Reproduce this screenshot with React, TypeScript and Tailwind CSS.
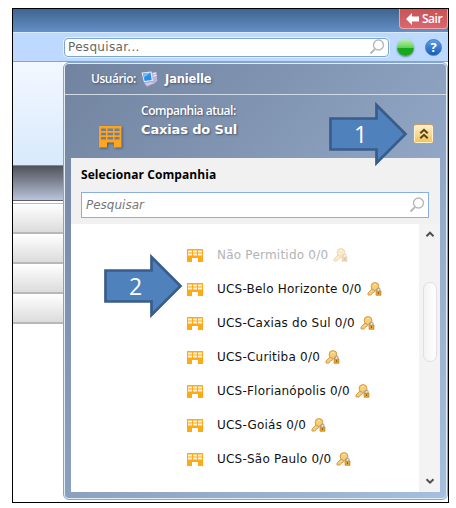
import React from 'react';

type Company = { name: string; disabled?: boolean };

const companies: Company[] = [
  { name: 'Não Permitido 0/0', disabled: true },
  { name: 'UCS-Belo Horizonte 0/0' },
  { name: 'UCS-Caxias do Sul 0/0' },
  { name: 'UCS-Curitiba 0/0' },
  { name: 'UCS-Florianópolis 0/0' },
  { name: 'UCS-Goiás 0/0' },
  { name: 'UCS-São Paulo 0/0' },
];

function SearchIcon() {
  return (
    <svg width="16" height="16" viewBox="0 0 16 16" fill="none" stroke="#b9b9b9" strokeWidth="1.4">
      <circle cx="9.5" cy="6" r="5" />
      <path d="M6 10 1.5 14.5" strokeWidth="2" />
    </svg>
  );
}

function CompanyIcon() {
  return (
    <svg width="16" height="13" viewBox="0 0 16 13" className="shrink-0">
      <path d="M0 0h16v13h-5V9H5v4H0z" fill="#ffa917" />
      <path d="M1 1.500h4v2H1zM6 1.500h4v2H6zM11 1.500h4v2h-4zM1 4.500h4v2H1zM6 4.500h4v2H6zM11 4.500h4v2h-4z" fill="#fff3dc" />
    </svg>
  );
}

function BuildingIcon() {
  return (
    <svg width="23" height="22" viewBox="0 0 23 22" className="drop-shadow-[1px_1px_1px_#4b5a74]">
      <path d="M0 0h22.500v21.500H15v-5H8v5H0z" fill="#fda51c" />
      <path d="M2 2.500h5v2.500H2zM8.500 2.500h5.500v2.500H8.500zM15.500 2.500h5v2.500h-5zM2 6.800h5v2.500H2zM8.500 6.800h5.500v2.500H8.500zM15.500 6.800h5v2.500h-5zM2 11h5v2.500H2zM8.500 11h5.500v2.500H8.500zM15.500 11h5v2.500h-5z" fill="#71809a" />
    </svg>
  );
}

function KeyIcon() {
  return (
    <svg width="15" height="14" viewBox="0 0 15 14" className="shrink-0">
      <path d="M5.500 6.500 1 11v2h3l1-1.500L8.500 9" fill="#f4cf83" stroke="#d39b49" />
      <circle cx="8" cy="4.500" r="3.900" fill="#f7cd75" stroke="#d79a3e" />
      <path d="M6.500 3.200q1-1.200 2.500-.8" fill="none" stroke="#fff1bd" />
      <path d="M9.800 9V7.600a1.600 1.600 0 0 1 3.200 0V9" fill="none" stroke="#a7a6a0" strokeWidth="1.200" />
      <path d="M9 9h5v4.300H9z" fill="#e4a130" stroke="#c78729" strokeWidth=".7" />
      <path d="M11.500 10.200v1.800" stroke="#8a5a16" />
    </svg>
  );
}

function ComputerIcon() {
  return (
    <svg width="17" height="16" viewBox="0 0 17 16">
      <path d="m10 2 5.500-1 .8 9-4.300 3.500z" fill="#b9b8da" />
      <path d="m12 2.500 3-.5M12.500 5l3-.7" stroke="#f1f0ff" />
      <path d="m.5 1.500 10-1 1.500 9.500-9 1.500z" fill="#e9e9f8" />
      <path d="m1.800 2.600 7.700-.8 1.200 7.200-7 1.100z" fill="#2b8fe9" />
      <path d="m1.800 2.600 7.700-.8-6.700 5z" fill="#70c0fb" />
      <path d="m3 12 8-1.500 3 1.500-8 3.500z" fill="#cfcce8" stroke="#9c98c4" strokeWidth=".6" />
    </svg>
  );
}

function ScrollArrow({ down }: { down?: boolean }) {
  return (
    <svg width="10" height="7" viewBox="0 0 10 7" fill="none" stroke="#505050" strokeWidth="2">
      <path d={down ? 'm1.500 1.200 3.500 3.500 3.500-3.500' : 'm1.500 5.200 3.500-3.500 3.500 3.500'} />
    </svg>
  );
}

function StepArrow({ step, className }: { step: number; className: string }) {
  return (
    <div className={`absolute h-[66px] w-[79px] ${className}`}>
      <svg width="79" height="66" viewBox="0 0 79 66">
        <path d="M1.500 17.500H47.500V4L76.500 33 47.500 62V48.500H1.500z" fill="#4f81bd" stroke="#385d8a" strokeWidth="2.700" />
      </svg>
      <span className="absolute left-[25px] top-[19px] font-['Open_Sans',sans-serif] text-[23px] leading-[28px] text-white">{step}</span>
    </div>
  );
}

export default function App() {
  return (
    <div className="relative h-[508px] w-[456px] overflow-hidden bg-white pl-3 pt-2 font-['DejaVu_Sans',sans-serif]">
      <div className="flex h-[495px] w-[437px] flex-col border border-black bg-white">
        {/* Title bar */}
        <div className="flex h-6 shrink-0 justify-end border-b border-[#d9ecff] bg-linear-to-b from-[#3f658f] to-[#6590c7]">
          <div className="flex h-5 w-[49px] items-center gap-[3px] rounded-b-sm border border-t-0 border-[#f4a3a4] bg-linear-to-b from-[#c95357] to-[#d9676b] pl-[6px]">
            <svg width="13" height="12" viewBox="0 0 13 12">
              <path d="M0 6 6 0v3.500h7v5H6V12z" fill="white" />
            </svg>
            <span className="font-['Open_Sans',sans-serif] text-[12px] font-semibold leading-4 tracking-[-0.5px] text-white">Sair</span>
          </div>
        </div>

        {/* Global search */}
        <div className="flex h-[29px] shrink-0 items-center border-b border-[#7fa5d2] bg-[#bdd9ff] pl-[51px]">
          <div className="flex h-[19px] w-[325px] items-center justify-between rounded-sm border border-[#7da6d3] bg-white pl-[3px] pr-[3px] ring-1 ring-[#e2f0ff]">
            <span className="text-[12px] leading-4 tracking-[0.32px] text-[#666]">Pesquisar...</span>
            <SearchIcon />
          </div>
          <div className="ml-2 h-[17px] w-[17px] rounded-full bg-linear-to-b from-[#b5efaa] from-5% via-[#5fd457] via-50% to-[#17a91c] to-55% shadow-[0_1px_2px_#5f8191]" />
          <div className="ml-[11px] flex h-[17px] w-[17px] items-center justify-center rounded-full border border-[#477fc0] bg-linear-to-b from-[#5c9ee5] to-[#175bb8] font-['Open_Sans',sans-serif] text-[13px] font-bold leading-none text-white">?</div>
        </div>

        <div className="flex min-h-0 flex-1">
          {/* Page behind the panel */}
          <div className="w-[50px] shrink-0">
            <div className="h-[103px] bg-linear-to-b from-[#f3f8ff] to-[#d8eafc]" />
            <div className="h-9 border-b border-t border-b-[#5e6066] border-t-[#6d8db6] bg-linear-to-b from-[#505359] to-[#b9c4dc]" />
            <div className="h-[3px] border-b border-[#bbb] bg-white" />
            {[0, 1, 2, 3].map((i) => (
              <div key={i} className="h-[30px] border-b-2 border-[#b8b8b8] bg-linear-to-b from-white to-[#dcdcdc]" />
            ))}
          </div>

          {/* Company panel */}
          <div className="h-[438px] w-[385px] rounded-md border border-[#86a5cb] bg-[#e3edf8] p-px">
            <div className="flex h-full flex-col rounded bg-linear-to-br from-[#71839f] to-[#a6bfde]">
              <div className="flex h-[31px] shrink-0 items-center border-b border-[#d0d9e6] pl-[26px] text-white [text-shadow:1px_1px_2px_#46546e]">
                <span className="w-[50px] whitespace-nowrap font-['Open_Sans',sans-serif] text-[12px] font-semibold leading-4 tracking-[-0.45px]">Usuário:</span>
                <ComputerIcon />
                <span className="ml-[7px] text-[11.5px] font-bold leading-4 tracking-[-0.15px]">Janielle</span>
              </div>
              <div className="flex h-[63px] shrink-0 pl-[34px] pr-[12px]">
                <div className="w-[42px] pt-[31px]"><BuildingIcon /></div>
                <div className="flex-1 whitespace-nowrap pt-[8px] text-white [text-shadow:1px_1px_2px_#46546e]">
                  <p className="font-['Open_Sans',sans-serif] text-[12px] font-semibold leading-4 tracking-[-0.48px]">Companhia atual:</p>
                  <p className="mt-[3px] text-[13px] font-bold leading-4 tracking-[-0.15px]">Caxias do Sul</p>
                </div>
                <button className="mt-[29px] flex h-5 w-[21px] items-center justify-center rounded-[3px] border border-[#cf9b66] bg-linear-to-b from-[#fff0cb] to-[#efc355] shadow-[inset_0_0_0_1px_#fff0cc]">
                  <svg width="10" height="12" viewBox="0 0 10 12" fill="none" stroke="#5b4312" strokeWidth="2">
                    <path d="m1.300 5.300 3.700-3.500 3.700 3.500M1.300 10.300 5 6.800l3.700 3.500" />
                  </svg>
                </button>
              </div>

              <div className="ml-[6px] flex h-[334px] w-[369px] shrink-0 flex-col bg-white">
                <div className="h-[66px] shrink-0 bg-[#f1f1f1] pl-[10px] pt-[9px]">
                  <h2 className="font-['Open_Sans',sans-serif] text-[12px] font-bold leading-4 tracking-[0.07px]">Selecionar Companhia</h2>
                  <div className="mt-[9px] flex h-[26px] w-[348px] items-center justify-between border border-[#88afe0] bg-white pl-1 pr-[3px]">
                    <span className="text-[12px] italic leading-4 text-[#777]">Pesquisar</span>
                    <SearchIcon />
                  </div>
                </div>
                <div className="flex min-h-0 flex-1">
                  <ul className="w-[348px] pl-[116px] pt-[14px]">
                    {companies.map((c) => (
                      <li key={c.name} className="flex h-[34px] items-center">
                        <CompanyIcon />
                        <span className={`ml-[14px] whitespace-nowrap text-[12px] leading-4 tracking-[0.22px] ${c.disabled ? 'text-[#b3b3b3]' : 'text-[#111]'}`}>{c.name}</span>
                        <span className={`ml-[5px] ${c.disabled ? 'opacity-40' : ''}`}><KeyIcon /></span>
                      </li>
                    ))}
                  </ul>
                  <div className="flex w-[21px] flex-col items-center bg-[#f3f3f3] py-[7px]">
                    <ScrollArrow />
                    <div className="mt-[44px] h-[80px] w-[14px] rounded-full border border-[#e1e1e1] bg-linear-to-r from-[#f3f3f3] to-white" />
                    <div className="mt-auto"><ScrollArrow down /></div>
                  </div>
                </div>
              </div>
            </div>
          </div>
        </div>
      </div>

      <StepArrow step={1} className="left-[329px] top-[101px]" />
      <StepArrow step={2} className="left-[104px] top-[253px]" />
    </div>
  );
}
